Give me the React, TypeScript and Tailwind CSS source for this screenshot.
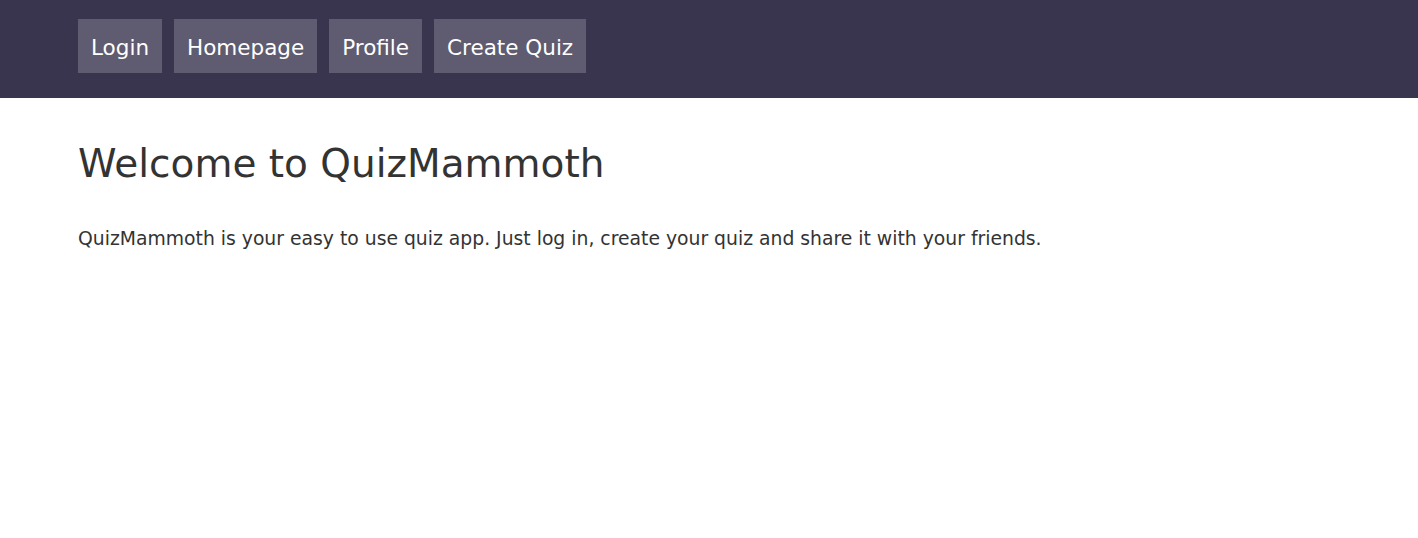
import React from 'react';

const links = ['Login', 'Homepage', 'Profile', 'Create Quiz'];

export default function App() {
  return (
    <div className="min-h-[538px] bg-white font-['DejaVu_Sans',sans-serif]">
      <nav className="bg-[#3a354f] h-[98px] pl-[78px] pt-[19px]">
        <ul className="flex gap-[12px]">
          {links.map(l => (
            <li key={l}>
              <a href="#" className="flex h-[54px] items-center pt-[5px] px-[13px] bg-[#5f5b70] text-white text-[21.5px]">
                {l}
              </a>
            </li>
          ))}
        </ul>
      </nav>
      <main className="px-[78px] text-[#333333]">
        <h1 className="mt-[42px] text-[39px] leading-[48px]">Welcome to QuizMammoth</h1>
        <p className="mt-[39px] text-[18.8px] leading-[24px]">
          QuizMammoth is your easy to use quiz app. Just log in, create your quiz and share it with your friends.
        </p>
      </main>
    </div>
  );
}
